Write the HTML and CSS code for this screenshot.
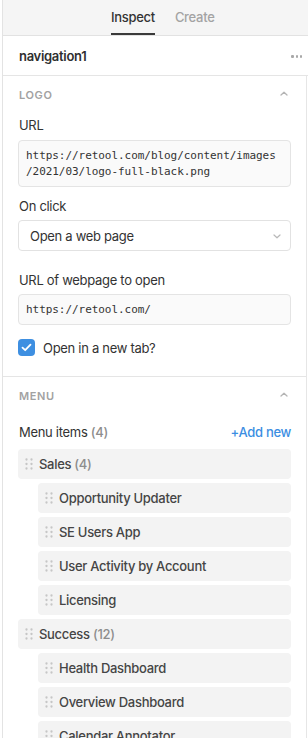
FILE: index.html
```html
<!DOCTYPE html>
<html>
<head>
<meta charset="utf-8">
<link rel="stylesheet" href="styles.css">
</head>
<body>
<svg width="0" height="0" style="position:absolute">
  <defs>
    <symbol id="grip" viewBox="0 0 8 12">
      <g fill="#c6c6c6">
        <circle cx="1.5" cy="1.5" r="1.15"/><circle cx="6.5" cy="1.5" r="1.15"/>
        <circle cx="1.5" cy="6" r="1.15"/><circle cx="6.5" cy="6" r="1.15"/>
        <circle cx="1.5" cy="10.5" r="1.15"/><circle cx="6.5" cy="10.5" r="1.15"/>
      </g>
    </symbol>
    <symbol id="chev-up" viewBox="0 0 8 5">
      <path d="M1 4L4 1.2L7 4" fill="none" stroke="#b4b4b4" stroke-width="1.3" stroke-linecap="round" stroke-linejoin="round"/>
    </symbol>
  </defs>
</svg>
<div class="panel">
  <div class="tabs">
    <div class="tab active">Inspect</div>
    <div class="tab">Create</div>
  </div>
  <div class="name-row">
    <span class="name">navigation1</span>
    <span class="more"><i></i><i></i><i></i></span>
  </div>
  <div class="scroll">
    <section class="section">
      <div class="section-head">
        <span>LOGO</span>
        <svg class="chev-up" width="8" height="5"><use href="#chev-up"/></svg>
      </div>
      <div class="field first">
        <div class="label">URL</div>
        <div class="input code multi">https://retool.com/blog/content/images<br>/2021/03/logo-full-black.png</div>
      </div>
      <div class="field gap-sm">
        <div class="label">On click</div>
        <div class="select">
          <span>Open a web page</span>
          <svg class="chev-down" width="8" height="5" viewBox="0 0 8 5"><path d="M1 1L4 3.8L7 1" fill="none" stroke="#b8b8b8" stroke-width="1.2" stroke-linecap="round" stroke-linejoin="round"/></svg>
        </div>
      </div>
      <div class="field gap-lg">
        <div class="label">URL of webpage to open</div>
        <div class="input code single">https://retool.com/</div>
      </div>
      <div class="check-row">
        <span class="checkbox">
          <svg width="11" height="9" viewBox="0 0 11 9"><path d="M1.5 4.6L4.2 7.2L9.5 1.6" fill="none" stroke="#fff" stroke-width="1.8" stroke-linecap="round" stroke-linejoin="round"/></svg>
        </span>
        <span class="check-label">Open in a new tab?</span>
      </div>
    </section>
    <section class="section menu">
      <div class="section-head">
        <span>MENU</span>
        <svg class="chev-up" width="8" height="5"><use href="#chev-up"/></svg>
      </div>
      <div class="items-head">
        <span>Menu items <span class="count">(4)</span></span>
        <span class="add">+Add new</span>
      </div>
      <div class="items">
        <div class="item"><svg class="grip" width="8" height="12"><use href="#grip"/></svg><span>Sales <span class="count">(4)</span></span></div>
        <div class="item sub"><svg class="grip" width="8" height="12"><use href="#grip"/></svg><span>Opportunity Updater</span></div>
        <div class="item sub"><svg class="grip" width="8" height="12"><use href="#grip"/></svg><span>SE Users App</span></div>
        <div class="item sub"><svg class="grip" width="8" height="12"><use href="#grip"/></svg><span>User Activity by Account</span></div>
        <div class="item sub"><svg class="grip" width="8" height="12"><use href="#grip"/></svg><span>Licensing</span></div>
        <div class="item"><svg class="grip" width="8" height="12"><use href="#grip"/></svg><span>Success <span class="count">(12)</span></span></div>
        <div class="item sub"><svg class="grip" width="8" height="12"><use href="#grip"/></svg><span>Health Dashboard</span></div>
        <div class="item sub"><svg class="grip" width="8" height="12"><use href="#grip"/></svg><span>Overview Dashboard</span></div>
        <div class="item sub"><svg class="grip" width="8" height="12"><use href="#grip"/></svg><span>Calendar Annotator</span></div>
      </div>
    </section>
  </div>
</div>
</body>
</html>
```
FILE: styles.css
```css
html, body {
  margin: 0;
  padding: 0;
  background: #fff;
  height: 738px;
  overflow: hidden;
}
body {
  font-family: Inter, "Noto Sans", "Liberation Sans", sans-serif;
  font-size: 13px;
  letter-spacing: -0.3px;
  color: #333;
  -webkit-font-smoothing: antialiased;
}
.panel {
  margin-left: 2px;
  border-left: 1px solid #e3e3e3;
  height: 738px;
}
.tabs {
  height: 35px;
  background: #f5f5f5;
  border-bottom: 1px solid #e2e2e2;
  display: flex;
  gap: 20px;
  padding-left: 108px;
}
.tab {
  box-sizing: border-box;
  height: 35px;
  padding-top: 2px;
  line-height: 31px;
  font-weight: 500;
  color: #a3a3a3;
  border-bottom: 2px solid transparent;
}
.tab.active {
  color: #333;
  border-bottom-color: #3a3a3a;
}
.name-row {
  height: 39px;
  border-bottom: 1px solid #e5e5e5;
  display: flex;
  align-items: center;
  justify-content: space-between;
  padding: 0 6px 0 16px;
}
.name {
  font-weight: 600;
  font-size: 13px;
  color: #2f2f2f;
}
.more {
  display: flex;
  gap: 2px;
  padding-top: 2px;
}
.more i {
  width: 2.2px;
  height: 2.2px;
  border-radius: 50%;
  background: #a8a8a8;
}
.scroll {
  margin-right: 1px;
  border-right: 1px solid #e6e6e6;
}
.section {
  padding: 0 15px 20px 15px;
  border-bottom: 1px solid #e5e5e5;
}
.section-head {
  height: 37px;
  display: flex;
  align-items: center;
  justify-content: space-between;
  padding: 0 3px 0 1px;
  font-size: 11px;
  font-weight: 600;
  letter-spacing: 0.6px;
  color: #a2a2a2;
}
.chev-up {
  display: block;
  margin-top: -2px;
}
.field.first { margin-top: 4px; }
.field.gap-sm { margin-top: 11px; }
.field.gap-lg { margin-top: 21px; }
.label {
  line-height: 17px;
  padding-left: 1px;
  margin-bottom: 5px;
  color: #333;
}
.field.first .label { margin-bottom: 6px; }
.input {
  box-sizing: border-box;
  background: #fafafa;
  border: 1px solid #e4e4e4;
  border-radius: 4px;
  color: #333;
}
.code {
  font-family: "DejaVu Sans Mono", "Liberation Mono", monospace;
  font-size: 11px;
  letter-spacing: -0.05px;
}
.input.multi {
  height: 47px;
  padding: 7px 7px;
  line-height: 15.5px;
}
.input.single {
  height: 31px;
  line-height: 29px;
  padding: 0 7px;
}
.select {
  box-sizing: border-box;
  height: 31px;
  border: 1px solid #e2e2e2;
  border-radius: 4px;
  background: #fff;
  display: flex;
  align-items: center;
  justify-content: space-between;
  padding: 0 9px 0 11px;
  color: #333;
}
.chev-down { display: block; margin-top: 1px; }
.check-row {
  margin-top: 14px;
  display: flex;
  align-items: center;
  gap: 8px;
  height: 17px;
}
.checkbox {
  width: 17px;
  height: 17px;
  border-radius: 4px;
  background: #3e8fe1;
  display: flex;
  align-items: center;
  justify-content: center;
}
.checkbox svg { display: block; }
.check-label { color: #333; }
.items-head {
  margin-top: 10px;
  line-height: 17px;
  display: flex;
  justify-content: space-between;
  padding-left: 1px;
}
.count { color: #8d8d8d; font-weight: 500; }
.add {
  color: #3b8ee2;
  font-weight: 500;
}
.items {
  margin-top: 8px;
  display: flex;
  flex-direction: column;
  gap: 4px;
}
.item {
  height: 30px;
  border-radius: 4px;
  background: #f3f3f3;
  display: flex;
  align-items: center;
  gap: 6px;
  padding-left: 7px;
  font-weight: 500;
  color: #454545;
}
.item.sub { margin-left: 20px; }
.grip { display: block; flex: none; }
```
